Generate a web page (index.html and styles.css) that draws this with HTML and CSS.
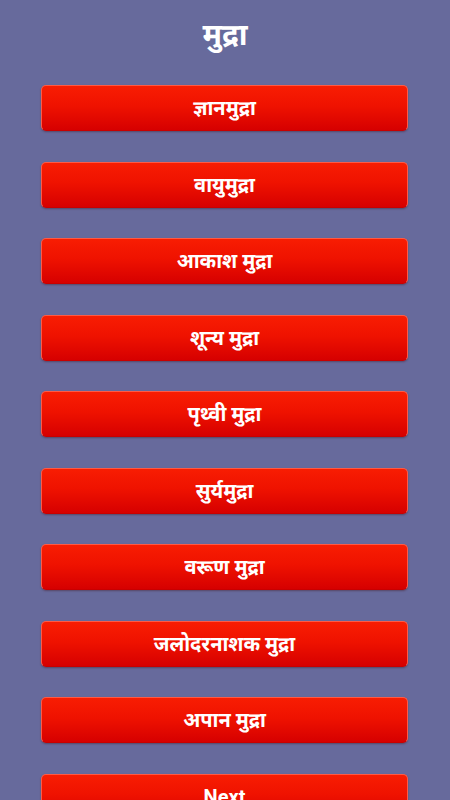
FILE: index.html
```html
<!DOCTYPE html>
<html lang="hi">
<head>
<meta charset="utf-8">
<meta name="viewport" content="width=device-width, initial-scale=1">
<title>मुद्रा</title>
<link rel="stylesheet" href="styles.css">
</head>
<body>
<div class="screen">
  <h1 class="title">मुद्रा</h1>
  <div class="list">
    <button class="btn">ज्ञानमुद्रा</button>
    <button class="btn">वायुमुद्रा</button>
    <button class="btn">आकाश मुद्रा</button>
    <button class="btn">शून्य मुद्रा</button>
    <button class="btn">पृथ्वी मुद्रा</button>
    <button class="btn">सुर्यमुद्रा</button>
    <button class="btn">वरूण मुद्रा</button>
    <button class="btn">जलोदरनाशक मुद्रा</button>
    <button class="btn">अपान मुद्रा</button>
    <button class="btn">Next</button>
  </div>
</div>
</body>
</html>
```
FILE: styles.css
```css
html, body {
  margin: 0;
  padding: 0;
  height: 100%;
  overflow: hidden;
}
body {
  background: #676a9c;
  font-family: Roboto, "Noto Sans Devanagari", "Noto Sans", sans-serif;
}
.screen {
  display: flex;
  flex-direction: column;
  align-items: stretch;
}
.title {
  margin: 0;
  padding-top: 15px;
  height: 85px;
  box-sizing: border-box;
  text-align: center;
  color: #ffffff;
  font-size: 30px;
  font-weight: 700;
  line-height: 40px;
}
.list {
  display: flex;
  flex-direction: column;
  gap: 30.5px;
  padding: 0 42px 0 41px;
}
.btn {
  height: 46px;
  border: 1px solid #ff5a44;
  border-bottom-color: #c80000;
  border-radius: 5px;
  background: linear-gradient(to bottom, #f81d02 0%, #ef1200 45%, #d60000 100%);
  box-shadow: 0 1px 2px rgba(60, 0, 0, 0.35);
  color: #ffffff;
  font-family: Roboto, "Noto Sans Devanagari", "Noto Sans", sans-serif;
  font-size: 20px;
  font-weight: 700;
  text-align: center;
  padding: 0;
  line-height: 44px;
}
```
